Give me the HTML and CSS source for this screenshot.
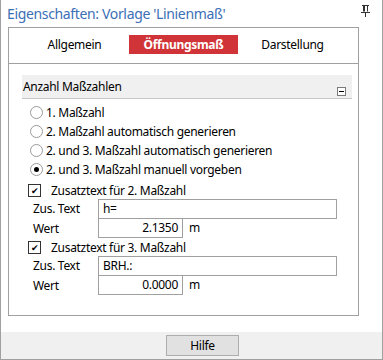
FILE: index.html
```html
<!DOCTYPE html>
<html lang="de">

<head>
    <meta charset="UTF-8">
    <meta name="viewport" content="width=device-width, initial-scale=1.0">
    <title>Eigenschaften</title>
    <link rel="stylesheet" href="styles.css">
</head>

<body>
    <div class="window">
        <div class="titlebar">
            <div class="title">Eigenschaften: Vorlage 'Linienmaß'</div>
            <svg class="pin" width="9" height="12" viewBox="0 0 9 12">
                <path d="M1 0.5H8M2.5 1V6.5M3.5 1V6.5M6.5 1V6.5M0 7.5H9M4.5 8V12" stroke="#333" stroke-width="1" fill="none" />
            </svg>
        </div>

        <div class="main">
            <div class="panel">
                <div class="tabs">
                    <div class="tab">Allgemein</div>
                    <div class="tab active">Öffnungsmaß</div>
                    <div class="tab">Darstellung</div>
                </div>

                <div class="content">
                    <div class="section-head">
                        <span>Anzahl Maßzahlen</span>
                        <span class="collapse"></span>
                    </div>

                    <div class="radios">
                        <label class="radio"><span class="dot"></span>1. Maßzahl</label>
                        <label class="radio"><span class="dot"></span>2. Maßzahl automatisch generieren</label>
                        <label class="radio"><span class="dot"></span>2. und 3. Maßzahl automatisch generieren</label>
                        <label class="radio checked"><span class="dot"></span>2. und 3. Maßzahl manuell vorgeben</label>
                    </div>

                    <label class="check"><span class="box">✔</span>Zusatztext für 2. Maßzahl</label>
                    <div class="fields">
                        <div class="label">Zus. Text</div>
                        <div class="input wide">h=</div>
                        <div class="label">Wert</div>
                        <div class="value-row">
                            <div class="input num">2.1350</div>
                            <span class="unit">m</span>
                        </div>
                    </div>

                    <label class="check"><span class="box">✔</span>Zusatztext für 3. Maßzahl</label>
                    <div class="fields">
                        <div class="label">Zus. Text</div>
                        <div class="input wide">BRH.:</div>
                        <div class="label">Wert</div>
                        <div class="value-row">
                            <div class="input num">0.0000</div>
                            <span class="unit">m</span>
                        </div>
                    </div>
                </div>
            </div>
        </div>

        <div class="footer">
            <button class="btn">Hilfe</button>
        </div>
    </div>
</body>

</html>
```

FILE: styles.css
```css
body {
    margin: 0;
    padding: 0;
    background: #ffffff;
    font-family: 'Noto Sans', sans-serif;
    font-size: 12px;
    letter-spacing: -0.3px;
    color: #000000;
}

.window {
    width: 383px;
    height: 360px;
    box-sizing: border-box;
    border: 1px solid #a0a0a0;
    border-top: none;
    display: flex;
    flex-direction: column;
}

.titlebar {
    height: 27px;
    display: flex;
    align-items: center;
    justify-content: space-between;
    padding: 0 12px 0 6px;
}

.title {
    color: #3b6fb6;
    font-size: 14px;
    letter-spacing: -0.35px;
    margin-top: -1px;
}

.pin {
    margin-top: -6px;
}

.main {
    padding-left: 7px;
}

.panel {
    width: 351px;
    height: 289px;
    box-sizing: border-box;
    border: 1px solid #a0a0a0;
}

.tabs {
    display: flex;
    justify-content: center;
    padding: 7px 0 9px;
    border-bottom: 1px solid #a0a0a0;
}

.tab {
    width: 109px;
    height: 19px;
    line-height: 19px;
    text-align: center;
}

.tab.active {
    background: #d13438;
    color: #ffffff;
    font-weight: bold;
}

.content {
    padding: 11px 6px 0 13px;
}

.section-head {
    height: 23px;
    background: #f0f0f0;
    border-bottom: 1px solid #c8c8c8;
    display: flex;
    align-items: center;
    justify-content: space-between;
    padding-left: 1px;
}

.collapse {
    width: 7px;
    height: 7px;
    border: 1px solid #7a7a7a;
    background: #ffffff;
    margin: 9px 6px 0 0;
    position: relative;
}

.collapse::after {
    content: '';
    position: absolute;
    left: 1px;
    top: 3px;
    width: 5px;
    height: 1px;
    background: #000000;
}

.radios {
    margin-top: 4px;
    padding-left: 8px;
}

.radio {
    display: flex;
    align-items: center;
    height: 19px;
}

.dot {
    width: 11px;
    height: 11px;
    border: 1px solid #9a9a9a;
    border-radius: 50%;
    margin-right: 3px;
    position: relative;
    background: #ffffff;
}

.radio.checked .dot::after {
    content: '';
    position: absolute;
    left: 3px;
    top: 3px;
    width: 5px;
    height: 5px;
    border-radius: 50%;
    background: #000000;
}

.check {
    display: flex;
    align-items: center;
    height: 18px;
    margin-top: 2px;
    padding-left: 6px;
}

.fields + .check {
    margin-top: 0;
}

.box {
    width: 11px;
    height: 11px;
    border: 1px solid #333333;
    margin-right: 10px;
    font-size: 9px;
    line-height: 11px;
    text-align: center;
}

.fields {
    display: grid;
    grid-template-columns: 65px auto;
    grid-template-rows: 20px 19px;
    padding-left: 11px;
}

.label {
    line-height: 20px;
}

.input {
    height: 20px;
    box-sizing: border-box;
    border: 1px solid #a0a0a0;
    line-height: 18px;
    padding: 0 4px;
    background: #ffffff;
}

.wide {
    width: 239px;
}

.value-row {
    display: flex;
    margin-top: -1px;
}

.num {
    width: 85px;
    text-align: right;
}

.unit {
    line-height: 20px;
    margin-left: 6px;
}

.footer {
    margin-top: auto;
    height: 27px;
    background: #f0f0f0;
    display: flex;
    align-items: center;
    padding-left: 165px;
}

.btn {
    width: 73px;
    height: 21px;
    border: 1px solid #adadad;
    background: #e1e1e1;
    font-family: inherit;
    font-size: 12px;
    letter-spacing: -0.3px;
    padding: 0;
}
```
